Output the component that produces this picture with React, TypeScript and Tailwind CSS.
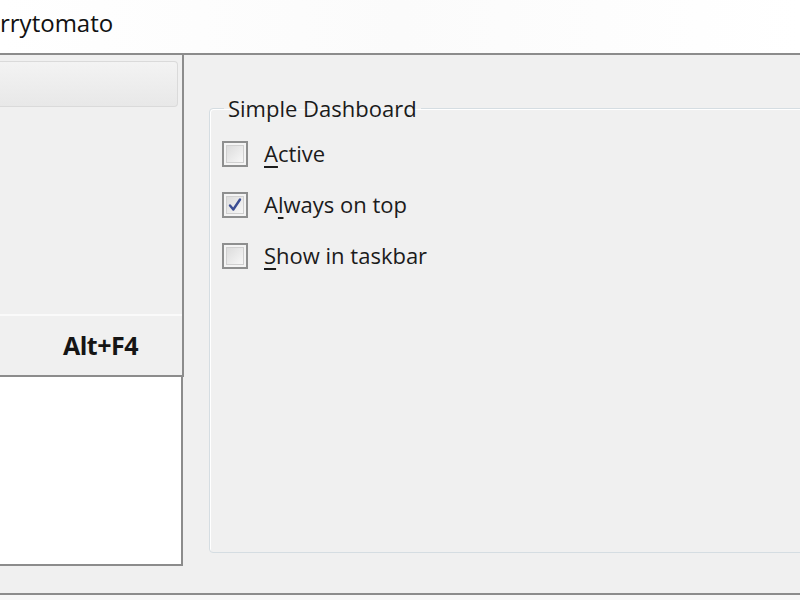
import React from 'react';

const font = { fontFamily: '"Open Sans", "Noto Sans", Arial, sans-serif' };

function Check({ checked }: { checked?: boolean }) {
    return (
        <span className="flex h-[26px] w-[26px] shrink-0 items-center justify-center border-2 border-[#8e8f8f] bg-[#f4f4f4]">
            <span className="flex h-[18px] w-[18px] items-center justify-center border border-[#d0d0d0] bg-gradient-to-br from-[#dcdcdc] to-[#f7f7f7]">
                {checked && (
                    <svg width="16" height="16" viewBox="0 0 16 16">
                        <path d="M3 8.5 L6.3 12.5 L13 2.5" fill="none" stroke="#3b4d93" strokeWidth="2.4" strokeLinecap="round" strokeLinejoin="round" />
                    </svg>
                )}
            </span>
        </span>
    );
}

function Row({ checked, access, rest, pre = '' }: { checked?: boolean; access: string; rest: string; pre?: string }) {
    return (
        <label className="flex h-[51px] items-center gap-[16px] text-[22px] text-[#1b1b1b]">
            <Check checked={checked} />
            <span>
                {pre}
                <span className="underline underline-offset-[4px]">{access}</span>
                {rest}
            </span>
        </label>
    );
}

export default function App() {
    return (
        <div className="flex h-[600px] w-[800px] flex-col overflow-hidden bg-white" style={font}>
            {/* title bar */}
            <div className="flex h-[53px] shrink-0 items-center bg-gradient-to-r from-white via-[#fbfbfb] to-white pb-[8px]">
                <span className="text-[24px] text-[#111]">rrytomato</span>
            </div>
            <div className="h-[2px] shrink-0 bg-[#8c8c8c]" />

            <div className="flex h-[538px] shrink-0 bg-[#f0f0f0]">
                {/* left menu panel */}
                <div className="flex w-[184px] shrink-0 flex-col">
                    <div className="flex h-[322px] flex-col border-r-2 border-b-2 border-[#8c8c8c] pt-[6px]">
                        <div className="h-[46px] w-[178px] rounded-r-[4px] border border-l-0 border-[#dadada] bg-gradient-to-b from-[#f3f3f3] to-[#e8e8e8]" />
                        <div className="flex-1" />
                        <div className="h-[2px] bg-[#fafafa]" />
                        <div className="flex h-[59px] items-center justify-end pr-[44px] text-[25px] font-bold tracking-[-0.5px] text-[#151515]">
                            Alt+F4
                        </div>
                    </div>
                    <div className="h-[189px] w-[183px] border-r-2 border-b-2 border-[#8c8c8c] bg-white" />
                </div>

                {/* group box */}
                <div className="flex-1 pl-[25px] pt-[38px]">
                    <fieldset className="h-[460px] w-[640px] rounded-[4px] border border-[#d5dde2] px-[12px] shadow-[inset_1px_1px_0_#ffffff]">
                        <legend className="ml-[2px] px-[4px] text-[22px] leading-[30px] text-[#1b1b1b]">Simple Dashboard</legend>
                        <div className="flex flex-col pt-[5px]">
                            <Row access="A" rest="ctive" />
                            <Row checked pre="A" access="l" rest="ways on top" />
                            <Row access="S" rest="how in taskbar" />
                        </div>
                    </fieldset>
                </div>
            </div>

            <div className="h-[2px] shrink-0 bg-[#8c8c8c]" />
            <div className="flex-1 bg-[#f7f7f7]" />
        </div>
    );
}
